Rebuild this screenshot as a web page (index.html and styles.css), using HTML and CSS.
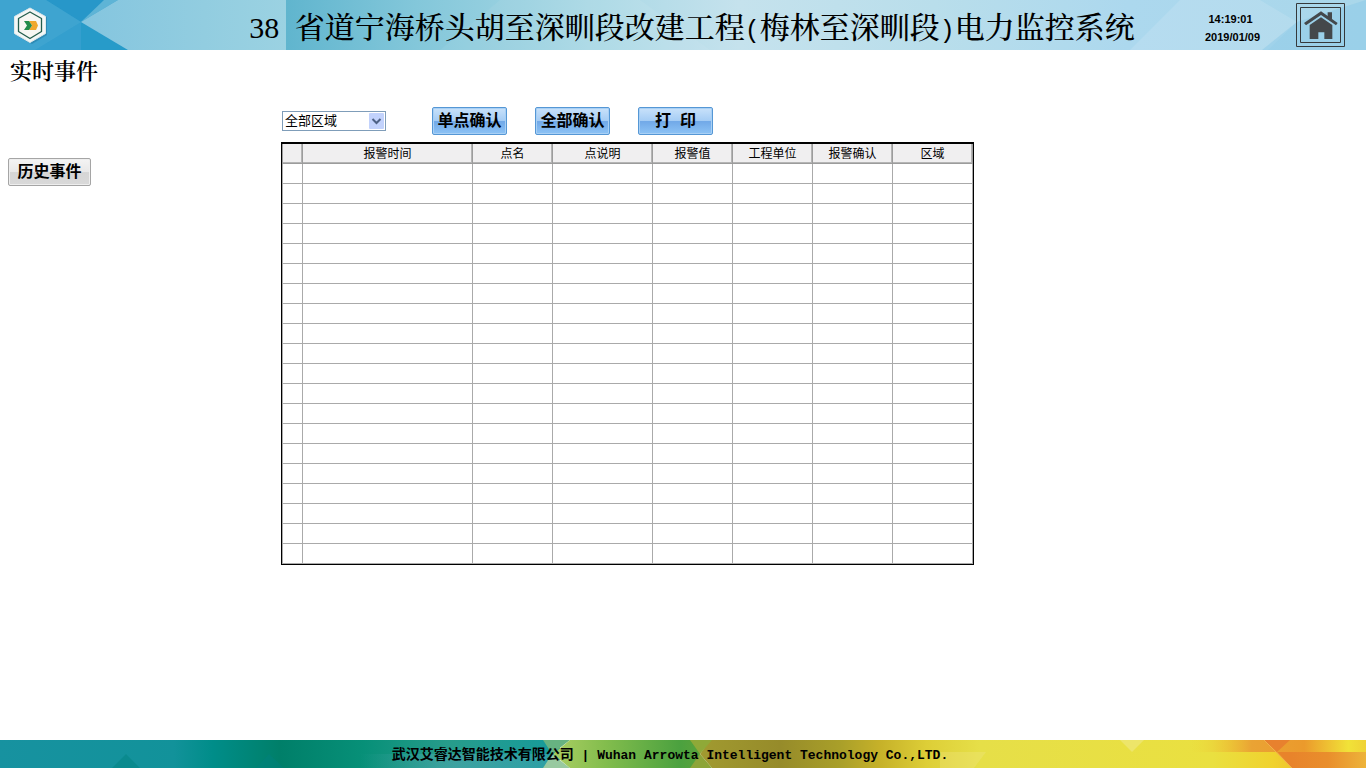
FILE: index.html
```html
<!DOCTYPE html>
<html lang="zh-CN">
<head>
<meta charset="utf-8">
<meta name="viewport" content="width=device-width, initial-scale=1">
<title>电力监控系统</title>
<link rel="stylesheet" href="styles.css">
</head>
<body>
<header class="top-bar">
  <svg class="backdrop" viewBox="0 0 1366 50" preserveAspectRatio="none" aria-hidden="true">
    <defs>
      <linearGradient id="sky" x1="286" y1="0" x2="1366" y2="0" gradientUnits="userSpaceOnUse">
        <stop offset="0" stop-color="#60b5ce"/><stop offset=".12" stop-color="#83c7da"/>
        <stop offset=".28" stop-color="#a9d8e5"/><stop offset=".42" stop-color="#c5e2ed"/>
        <stop offset=".6" stop-color="#b9deeb"/><stop offset=".78" stop-color="#acd8ee"/><stop offset="1" stop-color="#a9d7ea"/>
      </linearGradient>
      <linearGradient id="pale" x1="81" y1="0" x2="286" y2="0" gradientUnits="userSpaceOnUse">
        <stop offset="0" stop-color="#84c5df"/><stop offset=".6" stop-color="#92cde0"/><stop offset="1" stop-color="#9bd2e2"/>
      </linearGradient>
    </defs>
    <path fill="#349fce" d="M0 0H286V50H0z"/>
    <path fill="#2797c9" d="M46 0H118L81 22z"/>
    <path fill="#46a9d2" d="M0 0H46L81 22L35 50H0z" opacity=".6"/>
    <path fill="#279bc9" d="M81 22L128 50H81z"/>
    <path fill="#5eb4d6" d="M81 22L104 0H118z"/>
    <path fill="url(#pale)" d="M118 0H286V50H128L81 22z"/>
    <path fill="url(#sky)" d="M286 0H1366V50H286z"/>
    <path fill="#ffffff" opacity=".06" d="M286 50H440L500 0H640L710 50z"/>
    <path fill="#ffffff" opacity=".12" d="M1180 0H1260L1297 22L1268 50H1130z"/>
    <path fill="#8bc9e7" opacity=".5" d="M1297 22L1366 0V50H1262z"/>
  </svg>
  <div class="brand">
    <svg class="logo" viewBox="0 0 60 50" role="img" aria-label="Arrowta">
      <path fill="#237ca5" opacity=".6" d="M32 10L47 17V35L32 44L19 37z"/>
      <path fill="#f4f7f6" stroke="#dfe9eb" d="M30 8L45.500 16.500V33.500L30 42.500L14.500 33.500V16.500z"/>
      <path fill="#f7f7f3" stroke="#245d4d" stroke-width="1.300" stroke-linejoin="round" d="M30 12L41.500 18.500V31.500L30 38.500L18.500 31.500V18.500z"/>
      <path fill="#f0a82d" d="M29 21H36L38 25.500L36 30H29L32 25.500z"/>
      <path fill="#238c4b" d="M24 21H29L32 25.500L29 30H24L27 25.500z"/>
    </svg>
  </div>
  <h1 class="system-title">38 <span class="title-name">省道宁海桥头胡至深甽段改建工程<span class="paren">(</span>梅林至深甽段<span class="paren">)</span>电力监控系统</span></h1>
  <div class="top-tools">
    <div class="clock"><time>14:19:01</time><time>2019/01/09</time></div>
    <a class="home" href="#" aria-label="主页">
      <svg class="home-icon" viewBox="510 9 147 132" aria-hidden="true">
        <path fill="none" stroke="#35393b" stroke-width="3" d="M511.500 10.500H655.500V139.500H511.500zM523.500 22.500H643.500V127.500H523.500z"/>
        <path fill="#44484b" d="M534 69L585 34L605 48V37H618V57L635 69L630 76L585 45L540 76z"/>
        <path fill="#44484b" d="M551 75L585 52L619 75V117H595V97H577V117H551z"/>
      </svg>
    </a>
  </div>
</header>
<main class="workspace">
  <aside class="side">
    <h2 class="page-title">实时事件</h2>
    <button class="btn btn-grey" type="button">历史事件</button>
  </aside>
  <section class="events">
    <div class="toolbar">
      <select class="zone" aria-label="区域"><option>全部区域</option></select>
      <div class="actions">
        <button class="btn btn-blue" type="button">单点确认</button>
        <button class="btn btn-blue" type="button">全部确认</button>
        <button class="btn btn-blue btn-print" type="button">打&nbsp; 印</button>
      </div>
    </div>
    <table class="grid">
      <colgroup><col class="c-mark"><col class="c-time"><col class="c-std"><col class="c-desc"><col class="c-std"><col class="c-std"><col class="c-std"><col class="c-std"></colgroup>
      <thead><tr><th></th><th>报警时间</th><th>点名</th><th>点说明</th><th>报警值</th><th>工程单位</th><th>报警确认</th><th>区域</th></tr></thead>
      <tbody>
        <tr><td></td><td></td><td></td><td></td><td></td><td></td><td></td><td></td></tr>
        <tr><td></td><td></td><td></td><td></td><td></td><td></td><td></td><td></td></tr>
        <tr><td></td><td></td><td></td><td></td><td></td><td></td><td></td><td></td></tr>
        <tr><td></td><td></td><td></td><td></td><td></td><td></td><td></td><td></td></tr>
        <tr><td></td><td></td><td></td><td></td><td></td><td></td><td></td><td></td></tr>
        <tr><td></td><td></td><td></td><td></td><td></td><td></td><td></td><td></td></tr>
        <tr><td></td><td></td><td></td><td></td><td></td><td></td><td></td><td></td></tr>
        <tr><td></td><td></td><td></td><td></td><td></td><td></td><td></td><td></td></tr>
        <tr><td></td><td></td><td></td><td></td><td></td><td></td><td></td><td></td></tr>
        <tr><td></td><td></td><td></td><td></td><td></td><td></td><td></td><td></td></tr>
        <tr><td></td><td></td><td></td><td></td><td></td><td></td><td></td><td></td></tr>
        <tr><td></td><td></td><td></td><td></td><td></td><td></td><td></td><td></td></tr>
        <tr><td></td><td></td><td></td><td></td><td></td><td></td><td></td><td></td></tr>
        <tr><td></td><td></td><td></td><td></td><td></td><td></td><td></td><td></td></tr>
        <tr><td></td><td></td><td></td><td></td><td></td><td></td><td></td><td></td></tr>
        <tr><td></td><td></td><td></td><td></td><td></td><td></td><td></td><td></td></tr>
        <tr><td></td><td></td><td></td><td></td><td></td><td></td><td></td><td></td></tr>
        <tr><td></td><td></td><td></td><td></td><td></td><td></td><td></td><td></td></tr>
        <tr><td></td><td></td><td></td><td></td><td></td><td></td><td></td><td></td></tr>
        <tr><td></td><td></td><td></td><td></td><td></td><td></td><td></td><td></td></tr>
      </tbody>
    </table>
  </section>
</main>
<footer class="bottom-bar">
  <svg class="backdrop" viewBox="0 0 1366 28" preserveAspectRatio="none" aria-hidden="true">
    <defs>
      <linearGradient id="sea" x1="0" y1="0" x2="560" y2="0" gradientUnits="userSpaceOnUse">
        <stop offset="0" stop-color="#1792a0"/><stop offset=".31" stop-color="#12929a"/><stop offset=".38" stop-color="#008d89"/>
        <stop offset=".5" stop-color="#007f69"/><stop offset=".65" stop-color="#079078"/><stop offset=".8" stop-color="#279c8b"/><stop offset="1" stop-color="#169b9b"/>
      </linearGradient>
      <linearGradient id="leaf" x1="560" y1="0" x2="710" y2="0" gradientUnits="userSpaceOnUse">
        <stop offset="0" stop-color="#a5cc60"/><stop offset=".3" stop-color="#83bd4d"/><stop offset=".8" stop-color="#4ba13f"/><stop offset="1" stop-color="#60a338"/>
      </linearGradient>
      <linearGradient id="sun" x1="700" y1="0" x2="1366" y2="0" gradientUnits="userSpaceOnUse">
        <stop offset="0" stop-color="#a19a30"/><stop offset=".12" stop-color="#968b2a"/><stop offset=".21" stop-color="#a99f29"/>
        <stop offset=".27" stop-color="#c6b129"/><stop offset=".34" stop-color="#ddce37"/><stop offset=".42" stop-color="#e6df48"/>
        <stop offset=".77" stop-color="#eae040"/><stop offset=".86" stop-color="#f0d22e"/><stop offset=".93" stop-color="#edb62c"/><stop offset="1" stop-color="#eccf38"/>
      </linearGradient>
      <linearGradient id="glow" x1="1190" y1="0" x2="1366" y2="0" gradientUnits="userSpaceOnUse">
        <stop offset="0" stop-color="#efd836" stop-opacity="0"/><stop offset=".35" stop-color="#eaa334"/><stop offset=".65" stop-color="#eb9a2c"/><stop offset=".9" stop-color="#f1e238"/><stop offset="1" stop-color="#f0d236"/>
      </linearGradient>
      <linearGradient id="ember" x1="1290" y1="0" x2="1366" y2="0" gradientUnits="userSpaceOnUse">
        <stop offset="0" stop-color="#e8832b"/><stop offset=".5" stop-color="#e98e2c"/><stop offset="1" stop-color="#edb33a"/>
      </linearGradient>
      <linearGradient id="mist" x1="360" y1="0" x2="550" y2="0" gradientUnits="userSpaceOnUse">
        <stop offset="0" stop-color="#4da6ae" stop-opacity="0"/><stop offset=".5" stop-color="#4da6ae"/><stop offset="1" stop-color="#3ba2ac"/>
      </linearGradient>
    </defs>
    <path fill="url(#sea)" d="M0 0H560V28H0z"/>
    <path fill="#00807f" opacity=".45" d="M112 28L126 14L140 28zM256 28L269 14L284 28z"/>
    <path fill="url(#mist)" opacity=".6" d="M360 28V14H552L543 28z"/>
    <path fill="#67b381" d="M543 0H570L552 14z"/>
    <path fill="#98c9a0" d="M552 14L570 28H543z"/>
    <path fill="url(#leaf)" d="M570 0H700V28H570L553 14z"/>
    <path fill="url(#sun)" d="M710 0H1366V28H712L700 14z"/>
    <path fill="#8fa938" d="M690 0H712L700 14z"/>
    <path fill="#8da538" d="M700 14L712 28H690z"/>
    <path fill="#f1e98b" opacity=".55" d="M1120 0H1144L1132 12z"/>
    <path fill="#f1e98b" opacity=".3" d="M940 12H986L974 28H940z"/>
    <path fill="url(#glow)" d="M1190 0H1366V12H1190z"/>
    <path fill="#e8812e" d="M1264 0H1290L1277 12z"/>
    <path fill="url(#ember)" d="M1277 12H1366V28H1292z"/>
    <path fill="none" stroke="#f1ae4b" d="M1264 0L1292 28"/>
  </svg>
  <p class="company"><span class="company-name">武汉艾睿达智能技术有限公司</span> | Wuhan Arrowta Intelligent Technology Co.,LTD.</p>
</footer>
</body>
</html>
```

FILE: styles.css
```css
* { box-sizing: border-box; }

body {
  margin: 0;
  min-height: 100vh;
  display: flex;
  flex-direction: column;
  background: #fff;
  color: #000;
  font-family: "Liberation Sans", "Noto Sans CJK SC", sans-serif;
  font-size: 12px;
}

.top-bar,
.bottom-bar { position: relative; isolation: isolate; }

.backdrop {
  position: absolute;
  inset: 0;
  z-index: -1;
  width: 100%;
  height: 100%;
}

.top-bar {
  display: grid;
  grid-template-columns: 200px 1fr 182px;
  align-items: center;
  min-height: 50px;
}

.logo { display: block; width: 60px; height: 50px; }

.system-title {
  margin: 0;
  padding-top: 6px;
  text-align: center;
  white-space: nowrap;
  font: 500 30px/44px "Liberation Serif", "Noto Serif CJK SC", "Noto Sans CJK SC", serif;
}

.title-name { margin-left: 8px; }

.paren {
  font-family: "Liberation Mono", monospace;
  font-size: 25px;
  line-height: 1;
}

.top-tools {
  display: flex;
  align-items: center;
  justify-content: space-between;
  padding: 0 21px 0 21px;
}

.clock {
  display: flex;
  flex-direction: column;
  align-items: center;
  padding-top: 6px;
  font-size: 11px;
  font-weight: 700;
  line-height: 18px;
}

.clock time:first-child { padding-right: 4px; }

.home-icon { display: block; width: 49px; height: 44px; }

.workspace { flex: 1; display: flex; }

.side {
  flex: 0 0 281px;
  display: flex;
  flex-direction: column;
  align-items: flex-start;
  gap: 70px;
  padding: 6px 8px;
}

.page-title {
  margin: 0;
  padding-left: 2px;
  font: 600 22px/32px "Liberation Serif", "Noto Serif CJK SC", "Noto Sans CJK SC", serif;
}

.btn {
  height: 28px;
  padding: 0;
  border-radius: 2px;
  color: #000;
  font: 700 16px/24px "Liberation Sans", "Noto Sans CJK SC", sans-serif;
  white-space: nowrap;
}

.btn-grey {
  width: 83px;
  border: 1px solid #a5a5a5;
  background: linear-gradient(#f4f4f4, #e8e8e8 50%, #d6d6d6 52%, #d9d9d9);
  box-shadow: inset 0 0 0 1px #eee;
}

.btn-blue {
  width: 75px;
  border: 1px solid #5597d5;
  background: linear-gradient(#c9e2fa, #a6cdf5 48%, #71a9e8 52%, #8dc3f5);
  box-shadow: inset 0 0 0 1px #a9d0f5;
}

.events { flex: 1; padding: 57px 8px 20px 0; }

.toolbar {
  display: flex;
  align-items: center;
  gap: 46px;
  padding: 0 0 7px 1px;
}

.zone {
  appearance: none;
  width: 104px;
  height: 20px;
  padding: 0 20px 0 2px;
  border: 1px solid #7f9db9;
  border-radius: 0;
  color: #000;
  background:
    url("data:image/svg+xml,%3Csvg xmlns='http://www.w3.org/2000/svg' viewBox='0 0 15 16'%3E%3Crect width='15' height='16' rx='1' fill='%23c2d2fc'/%3E%3Cpath d='M3.500 6L7.500 10L11.500 6' fill='none' stroke='%234d6185' stroke-width='2'/%3E%3C/svg%3E") right 1px center / 15px 16px no-repeat,
    #fff;
  font: 13px/18px "Liberation Sans", "Noto Sans CJK SC", sans-serif;
}

.actions { display: flex; gap: 28px; }

.grid {
  width: 100%;
  max-width: 693px;
  table-layout: fixed;
  border: 1px solid #000;
  border-top-width: 2px;
  border-spacing: 0;
}

.c-mark { width: 21px; }
.c-time { width: 170px; }
.c-std { width: 80px; }
.c-desc { width: 100px; }

.grid th,
.grid td {
  height: 20px;
  padding: 0;
  border: solid #aaa;
  border-width: 0 1px 1px 0;
}

.grid th:first-child,
.grid td:first-child { border-left-width: 1px; }

.grid th {
  border-color: #9c9c9c;
  background: #f0eff0;
  box-shadow: inset -1px -1px 0 #b5b5b5;
  font-weight: 400;
  line-height: 18px;
}

.bottom-bar { min-height: 28px; }

.company {
  margin: 0;
  padding: 4px 26px 0 0;
  text-align: center;
  white-space: nowrap;
  font: 700 13px/24px "Liberation Mono", "Noto Sans CJK SC", monospace;
}

.company-name { font-size: 14px; line-height: 1; }
```
